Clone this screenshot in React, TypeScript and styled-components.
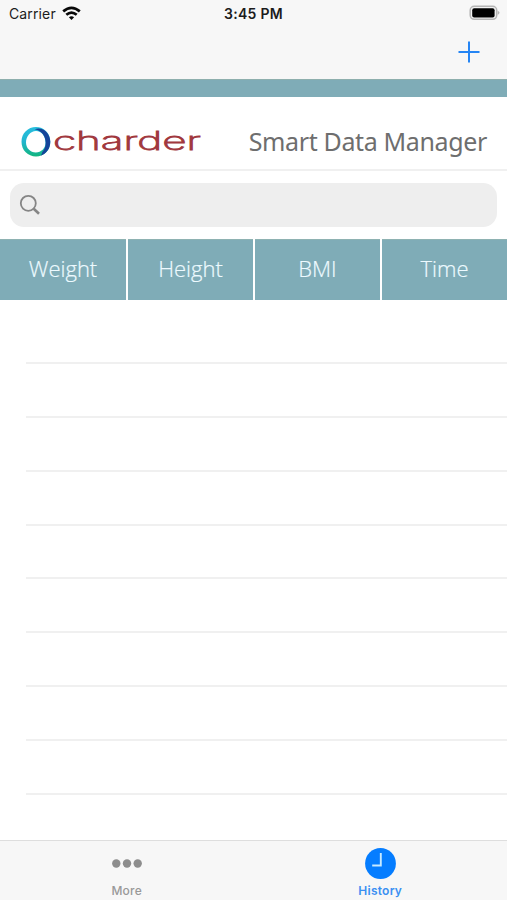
import React from "react";
import styled, { createGlobalStyle } from "styled-components";

const GlobalStyle = createGlobalStyle`
  * { box-sizing: border-box; }
  body { margin: 0; background: #fff; }
`;

const Screen = styled.div`
  width: 507px;
  height: 900px;
  display: flex;
  flex-direction: column;
  overflow: hidden;
  background: #fff;
  font-family: Inter, "Liberation Sans", sans-serif;
`;

const StatusBar = styled.header`
  height: 28px;
  flex: none;
  display: grid;
  grid-template-columns: 1fr auto 1fr;
  align-items: center;
  padding: 0 7px 2px 9px;
  background: #f7f7f7;
  color: #1c1c1c;
  font-size: 14px;
`;

const Carrier = styled.div`
  display: flex;
  align-items: center;
  gap: 6px;
  letter-spacing: 0.13px;
`;

const Clock = styled.div`
  font-weight: 600;
  letter-spacing: 0.28px;
  padding-right: 2px;
`;

const Battery = styled.div`
  display: flex;
  justify-content: flex-end;
`;

const NavBar = styled.nav`
  height: 51px;
  flex: none;
  display: flex;
  justify-content: flex-end;
  padding: 13px 27px 0 0;
  background: #f7f7f7;
`;

const IconButton = styled.button`
  width: 22px;
  height: 22px;
  padding: 0;
  border: 0;
  background: none;
`;

const Band = styled.div`
  height: 18px;
  flex: none;
  background: #7facb7;
  border-top: 1px solid #8eafad;
`;

const Brand = styled.section`
  height: 74px;
  flex: none;
  display: flex;
  justify-content: space-between;
  padding: 0 20px 0 20px;
  border-bottom: 2px solid #f0f0f0;
`;

const LogoMark = styled.svg`
  display: block;
  width: 184px;
  height: 36px;
  margin-top: 27px;
`;

const Title = styled.h1`
  margin: 27px 0 0;
  color: #6e6e6e;
  font: 400 25px/34px "Noto Sans", "Open Sans", sans-serif;
  white-space: nowrap;
  letter-spacing: -0.36px;
`;

const SearchField = styled.div`
  height: 44px;
  flex: none;
  margin: 12px 10px;
  padding-left: 9px;
  display: flex;
  align-items: center;
  border-radius: 14px;
  background: #eeeeee;
`;

const Columns = styled.div`
  height: 61px;
  flex: none;
  display: grid;
  grid-template-columns: 126px 125px 125px 125px;
  gap: 2px;
`;

const Column = styled.div`
  background: #7facb7;
  border-top: 1px solid #8eb2b2;
  color: #edfaff;
  font: 300 22px/56px "Open Sans", "Noto Sans", sans-serif;
  -webkit-text-stroke: 0.2px #edfaff;
  text-align: center;
`;

const List = styled.main`
  flex: 1;
  min-height: 0;
  padding: 10.4px 0 0 26px;
`;

const Row = styled.div`
  height: 53.8px;
  border-bottom: 2px solid #f0f0f0;
`;

const TabBar = styled.footer`
  height: 60px;
  flex: none;
  display: grid;
  grid-template-columns: 1fr 1fr;
  background: #f7f7f7;
  border-top: 1px solid #dedede;
`;

const Tab = styled.div<{ $active?: boolean }>`
  display: flex;
  flex-direction: column;
  align-items: center;
  gap: 4px;
  padding-top: 7px;
  color: ${(p) => (p.$active ? "#3b90f2" : "#999")};
  font-size: 12px;
  font-weight: ${(p) => (p.$active ? 600 : 500)};
  line-height: 16px;
  letter-spacing: 0.25px;
  svg { display: block; }
`;

const Wifi = () => (
  <svg width="19" height="15" viewBox="0 0 19 15" fill="none" stroke="#080808" strokeWidth="2.7">
    <path d="M1.2 5.4Q9.5-1.7 17.8 5.4" />
    <path d="M4.3 8.8Q9.5 4.3 14.7 8.8" />
    <path d="M6.9 11.2Q9.5 9.1 12.1 11.2L9.5 13.9Z" fill="#080808" stroke="none" />
  </svg>
);

const BatteryIcon = () => (
  <svg width="31" height="16" viewBox="0 0 31 16">
    <rect x="1.2" y="1.3" width="26.5" height="13" rx="4" fill="#f2f2f2" stroke="#b5b5b5" strokeWidth="1.5" />
    <rect x="3.2" y="3.2" width="22.4" height="9.4" rx="2" fill="#000" />
    <path d="M28.7 5.7Q32.3 7.8 28.7 10Z" fill="#b5b5b5" />
  </svg>
);

const Plus = () => (
  <svg width="22" height="22" viewBox="0 0 22 22" stroke="#2585f4" strokeWidth="2">
    <path d="M11 .5v21M.5 11h21" />
  </svg>
);

const SearchIcon = () => (
  <svg width="22" height="22" viewBox="0 0 22 22" fill="none" stroke="#858585">
    <circle cx="9.3" cy="9.3" r="7.5" strokeWidth="1.8" />
    <path d="M14.7 14.7l5.3 5" strokeWidth="2.6" />
  </svg>
);

const Logo = () => (
  <LogoMark viewBox="0 0 184 36">
    <defs>
      <linearGradient id="ring" x1="0" y1="0" x2="0" y2="1">
        <stop offset="0" stopColor="#27bedd" />
        <stop offset=".5" stopColor="#22b5cf" />
        <stop offset="1" stopColor="#12b57e" />
      </linearGradient>
    </defs>
    <path fillRule="evenodd" fill="url(#ring)" d="M16 3C8 3 1.5 9.2 1.5 17.7S8 32.4 16 32.4s14.3-6.2 14.3-14.7S24 3 16 3ZM16 7.1c5.8 0 9.5 5.4 9.5 11.7 0 5.7-4.3 9.6-9.7 9.6S6 24.3 6 18.5 10.4 7.1 16 7.1Z" />
    <path fill="#15449a" d="M14.7 5.2C23 2.2 30.3 9.4 30.3 17.8c0 7.1-4.4 12.4-10.1 14.2 1-.9 1.9-2.3 2.1-4 2.1-2.2 3.5-5.5 3.4-9.3-.1-6.5-3.9-12.2-11-13.5Z" />
    <text x="33" y="26" fill="#a1383e" stroke="#a1383e" strokeWidth=".8" fontFamily="Inter, sans-serif" fontSize="25" fontWeight="200" textLength="148" lengthAdjust="spacingAndGlyphs">charder</text>
  </LogoMark>
);

const More = () => (
  <svg width="32" height="31" viewBox="0 0 32 31" fill="#8d8d8d">
    <circle cx="5.3" cy="15.5" r="4.2" />
    <circle cx="16" cy="15.5" r="4.2" />
    <circle cx="26.7" cy="15.5" r="4.2" />
  </svg>
);

const HistoryIcon = () => (
  <svg width="31" height="31" viewBox="0 0 31 31">
    <circle cx="15.5" cy="15.5" r="15.4" fill="#057dff" />
    <path d="M15.8 5v12.5H7.2" fill="none" stroke="#c8eaff" strokeWidth="1.9" />
  </svg>
);

const columns = ["Weight", "Height", "BMI", "Time"];

export default function App() {
  return (
    <Screen>
      <GlobalStyle />
      <StatusBar>
        <Carrier>Carrier<Wifi /></Carrier>
        <Clock>3:45 PM</Clock>
        <Battery><BatteryIcon /></Battery>
      </StatusBar>
      <NavBar>
        <IconButton aria-label="Add"><Plus /></IconButton>
      </NavBar>
      <Band />
      <Brand>
        <Logo />
        <Title>Smart Data Manager</Title>
      </Brand>
      <SearchField><SearchIcon /></SearchField>
      <Columns>
        {columns.map((name) => <Column key={name}>{name}</Column>)}
      </Columns>
      <List>
        {Array.from({ length: 9 }, (_, i) => <Row key={i} />)}
      </List>
      <TabBar>
        <Tab><More />More</Tab>
        <Tab $active><HistoryIcon />History</Tab>
      </TabBar>
    </Screen>
  );
}
